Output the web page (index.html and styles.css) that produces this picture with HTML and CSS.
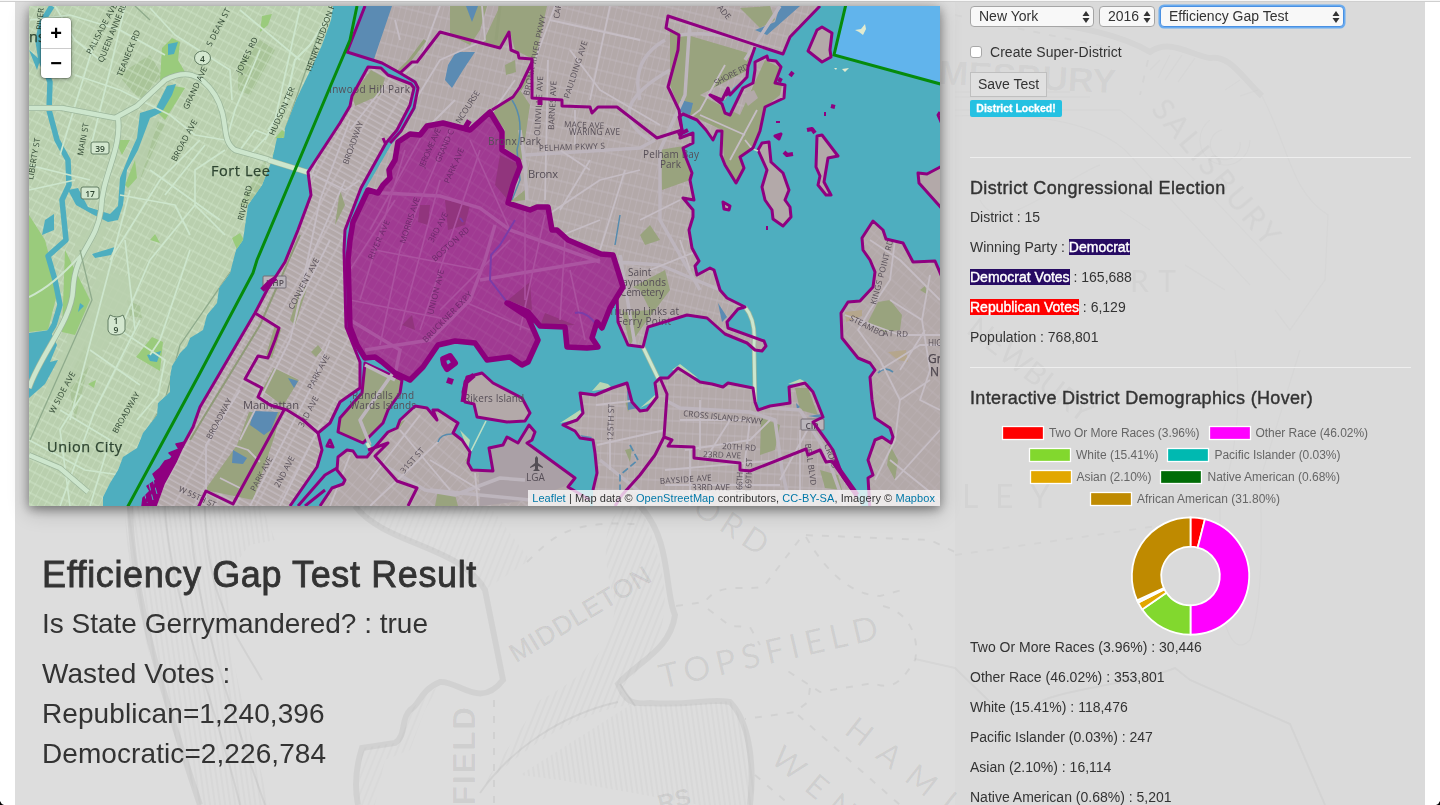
FILE: index.html
```html
<!DOCTYPE html>
<html lang="en">
<head>
<meta charset="utf-8">
<title>District Efficiency Gap</title>
<link rel="stylesheet" href="styles.css">
</head>
<body>
<div class="page">
  <svg class="backdrop" viewBox="0 0 1440 805" aria-hidden="true">
    <defs>
      <pattern id="hatchA" width="5" height="5" patternUnits="userSpaceOnUse" patternTransform="rotate(-8)"><path d="M1 0V5" class="etch thin"/></pattern>
      <pattern id="hatchB" width="6" height="6" patternUnits="userSpaceOnUse" patternTransform="rotate(22)"><path d="M1 0V6" class="etch thin"/></pattern>
    </defs>
    <path fill="url(#hatchA)" d="M125 506C125 580 155 690 200 805H270C240 690 205 590 250 545L275 540L262 506Z"/>
    <path class="etch bold" d="M130 506C132 600 165 700 200 805"/>
    <path class="etch" d="M165 506C170 600 215 700 240 805M190 506C190 600 235 720 265 805M205 506C205 600 240 640 262 680"/>
    <path fill="url(#hatchB)" d="M540 700C580 680 615 650 615 600C600 560 600 500 640 506C680 600 670 640 620 690L630 705C560 715 500 770 480 790Z"/>
    <path fill="url(#hatchA)" d="M630 705Q690 705 730 701Q760 740 752 805H700L560 780L520 775Z"/>
    <path fill="url(#hatchB)" d="M355 506C385 545 460 545 485 590L530 560L490 506ZM440 684L410 710L395 743L362 748L358 805H375L385 760L410 750L425 710Z" opacity=".7"/>
    <path class="etch bold" d="M355 506C385 545 460 545 485 590L503 680C480 710 458 680 440 682C420 690 420 705 410 710C400 720 407 735 395 743L362 748C355 770 355 790 358 805M640 506C672 540 664 590 675 615C670 650 640 660 618 684C625 700 630 705 650 703C690 706 710 698 730 702C748 720 755 760 750 805"/>
    <path class="etch" d="M618 702C560 715 510 750 480 793M620 684L635 706"/>
    <g class="etch dashed"><path d="M527 562C550 540 565 520 635 524"/><path d="M676 606L705 602C720 580 750 592 764 586L803 535L930 540L955 552M806 537C825 570 850 595 880 596L902 590M708 609L730 626L750 627L760 645M883 606C910 612 920 640 915 660C900 685 890 690 873 683L820 692L783 668M810 688L808 702L795 712L745 719M798 715L900 805M755 775L790 805M494 700V805"/></g>
    <path class="etch soft" d="M915 659L955 668L990 702M1040 702C1060 690 1150 680 1175 668L1190 680L1290 724L1325 805"/>
    <g class="mark">
      <text x="516" y="663" class="semi" font-size="26" transform="rotate(-31 516 663)" textLength="160">MIDDLETON</text>
      <text x="662" y="689" font-size="34" transform="rotate(-13 662 689)" textLength="224">TOPSFIELD</text>
      <text x="475" y="805" class="heavy" font-size="31" transform="rotate(-90 475 805)" textLength="98">FIELD</text>
      <text x="691" y="512" font-size="32" transform="rotate(33 691 512)" textLength="82">ORD</text>
      <text x="769" y="761" font-size="32" transform="rotate(40 769 761)" textLength="98">WEN</text>
      <text x="843" y="733" font-size="32" transform="rotate(38 843 733)" textLength="130">HAMI</text>
      <text x="660" y="812" class="heavy" font-size="24" transform="rotate(-14 660 812)">RS</text>
      <text x="938" y="84" class="heavy faint" font-size="34" transform="rotate(3 938 84)" textLength="178" lengthAdjust="spacingAndGlyphs">MESBURY</text>
      <g class="faint"><text x="1150" y="110" font-size="30" transform="rotate(50 1150 110)" textLength="180">SALISBURY</text>
      <text x="962" y="508" font-size="32" textLength="88">LEY</text>
      <text x="1130" y="292" font-size="30" textLength="46">RT</text>
      <text x="965" y="332" font-size="30" transform="rotate(38 965 332)">NEWBURY</text></g>
    </g>
    <g class="faint">
      <path class="etch bold" d="M1020 20Q1110 28 1150 52C1170 38 1190 55 1210 58C1230 55 1240 75 1262 96"/>
      <path class="etch thin" d="M1160 60L1150 70M1170 55L1158 78M1182 55L1165 80M1195 58L1178 82M1240 80L1225 90M1258 90L1240 96M955 92H1070M955 97H1090M955 110H1120Q1160 140 1290 280M955 116Q1080 110 1125 150L1250 285M1262 96C1290 150 1290 190 1328 215L1325 280L1290 330L1275 310M1210 120A25 25 0 1 0 1250 140M1222 130A15 15 0 1 0 1240 142M980 200C1000 240 1060 180 1100 165M1120 210L1150 230M1185 265L1225 290M1235 350Q1245 430 1220 500V600Q1230 660 1250 640Q1265 600 1260 480L1300 350"/>
      <path class="etch dashed" d="M955 15L1120 50M1148 60L1140 95M955 555L1200 520"/>
    </g>
    <path d="M0 801Q1 804 4 805H0ZM1440 801Q1439 804 1436 805H1440Z"/>
  </svg>

  <div class="container">
    <main class="main-col">
      <div class="map">
        <svg class="map-canvas" viewBox="29 6 911 500" width="911" height="500">
          <defs>
            <pattern id="gNJ" width="6" height="10" patternUnits="userSpaceOnUse" patternTransform="rotate(28)"><path d="M0 0V10M0 1H6" stroke="#d2e7cc" stroke-width=".8"/></pattern>
            <pattern id="gMan" width="18" height="5.5" patternUnits="userSpaceOnUse" patternTransform="rotate(29)"><path d="M1 0V6M0 1H18" stroke="#c6bec4" stroke-width="1.1"/></pattern>
            <pattern id="gBx" width="6" height="13" patternUnits="userSpaceOnUse" patternTransform="rotate(14)"><path d="M0 0V13M0 1H6" stroke="#c3bac0" stroke-width=".8"/></pattern>
            <pattern id="gD" width="7" height="12" patternUnits="userSpaceOnUse" patternTransform="rotate(32)"><path d="M0 0V12M0 1H7" stroke="#a84c9c" stroke-width=".8"/></pattern>
            <pattern id="gQ" width="7" height="12" patternUnits="userSpaceOnUse" patternTransform="rotate(3)"><path d="M0 0V12M0 1H7" stroke="#c3bac0" stroke-width=".8"/></pattern>
            <pattern id="gQ2" width="7" height="12" patternUnits="userSpaceOnUse" patternTransform="rotate(40)"><path d="M0 0V12M0 1H7" stroke="#c3bac0" stroke-width=".8"/></pattern>
            <path id="nj" d="M29 6H333L331 20 322 45 308 75 296 100 285 128 284 138 277 138 272 160 262 185 248 205 243 240 236 250 230 273 219 288 217 303 207 315 203 330 190 338 187 346 180 353 172 366 170 377 170 392 158 403 157 415 143 433 137 448 123 457 118 470 110 483 103 497 103 506H29Z"/>
            <path id="man" d="M368 67L352 96 350 106 340 123 308 172 311 195 298 230 285 262 267 290 255 313 200 407 193 427 182 447 172 458 160 477 143 506H290L317 467 322 450 318 433 330 423 340 402 360 388 360 362 346 327 344 250 345 230 361 188 386 143 397 130 410 105 414 88 410 84 388 75 381 68Z"/>
            <path id="bx" d="M365 6L347 52 382 63 400 73 415 80 418 88 416 108 400 135 391 145 365 190 350 230 348 260 350 327 365 358 382 362 410 380 423 367 438 345 475 343 487 360 510 357 522 365 528 362 538 340 528 317 540 326 565 327 567 347 587 348 598 347 592 338 597 322 602 328 610 308 617 295 618 322 628 345 643 347 648 327 687 315 707 318 725 334 747 343 755 350 762 351 766 346 764 341 728 328 727 322 738 309 745 307 727 298 720 290 714 270 710 268 697 275 695 266 699 261 692 248 689 230 693 217 693 210 683 198 694 200 690 180 692 173 686 158 683 148 693 143 693 133 680 138 682 130 679 117 683 114 697 120 706 130 713 140 717 131 722 131 721 155 725 165 736 183 744 168 740 157 753 148 760 131 765 107 784 98 785 85 775 83 781 67 776 61 768 60 767 56 755 62 755 70 753 83 743 88 730 115 725 113 722 104 710 95 725 100 733 88 747 77 748 67 755 47 783 54 790 37 820 6Z"/>
            <path id="randall" d="M365 363L402 380 400 393 388 410 383 423 363 443 338 432 340 418 362 393Z"/>
            <path id="astoria" d="M320 506L332 488 343 484 345 480 337 470 338 457 347 450 353 451 357 457 367 457 375 447 388 432 397 428 400 420 415 406 427 408 437 420 433 410 438 410 458 423 453 433 462 440 470 452 468 463 472 470 493 471 489 448 503 445 507 437 518 443 529 425 535 432 532 440 527 443 575 478 568 487 590 500V506Z"/>
            <path id="queens" d="M593 506V487L597 473 595 453 593 440 580 438 575 431 563 425 577 420 583 413 580 393 595 395 612 388 627 383 632 402 640 411 647 410 657 397 655 383 660 378 668 378 678 368 700 382 712 384 723 387 728 383 753 388 755 402 758 410 770 406 790 403 789 387 805 383 813 392 823 417 813 422 826 440 833 450 843 477 857 497 862 506Z"/>
            <path id="neck" d="M944 165L927 174 918 173 919 183 944 211ZM944 282L935 261 913 262 903 243 886 239 883 230 873 221 862 238 863 250 870 260 875 272 873 287 860 301 848 302 841 313 842 338 858 358 870 363 875 370 870 377 872 400 875 418 890 428 893 437 891 443 882 437 875 440 868 460 873 475 868 478 870 510H944Z"/>
            <path id="isles" d="M467 377L482 373 493 383 522 398 530 413 525 421 507 422 477 417 474 404 465 402 463 392ZM817 136L822 135 838 156 828 158 824 182 831 195 826 195 818 185 820 176 816 167ZM758 150L762 143 769 142 771 162 783 173 789 190 785 200 790 207 791 217 783 226 773 219 772 210 765 200 762 187 767 170ZM808 51L817 30 822 27 832 33 830 50 831 57 822 62ZM723 202L730 206 729 210 724 209ZM775 136L781 134 779 139Z"/>
            <path id="d15" d="M490 112L470 130 443 123 427 126 420 135 410 134 398 142 395 160 389 170 390 178 383 185 378 193 368 190 353 222 350 240 348 260 350 327 357 345 365 358 375 357 382 362 395 373 410 380 423 367 438 345 455 341 475 343 487 360 510 357 522 365 528 362 538 340 528 317 507 303 528 312 540 326 565 327 567 347 587 348 598 347 592 338 597 322 602 328 610 308 623 287 613 255 601 254 568 240 557 230 552 230 548 207 537 207 530 210 508 203 513 185 520 167 518 160 502 150 502 132Z"/>
            <clipPath id="cBx"><use href="#bx"/></clipPath><clipPath id="cMan"><use href="#man"/></clipPath><clipPath id="cNJ"><use href="#nj"/></clipPath><clipPath id="cD"><use href="#d15"/></clipPath>
            <clipPath id="cQ"><use href="#queens"/></clipPath><clipPath id="cA"><use href="#astoria"/></clipPath><clipPath id="cN"><use href="#neck"/></clipPath>
          </defs>
          <path fill="#4eaebf" d="M29 6H940V506H29Z"/>
          <path class="line-green" fill="#61b4ec" d="M846 4L834 55 944 85V0Z"/>
          <path fill="#e2ebd0" d="M855 30L861 29 865 24 866 29 863 35 859 32ZM842 69L849 68 845 72ZM834 68L837 68 836 70Z"/>

          <!-- New Jersey -->
          <use href="#nj" fill="#b9cfae"/>
          <g clip-path="url(#cNJ)">
            <path fill="#a9c499" d="M118 75L150 55 162 75 140 100ZM238 65L260 40 275 50 250 95 238 90ZM130 170L155 120 165 125 140 180ZM68 380L85 345 90 360 75 420ZM127 300L140 306 142 318 130 316ZM240 205L265 160 270 175 250 205Z"/>
            <path fill="url(#gNJ)" d="M29 6H340V506H29Z"/>
            <path fill="#b9cfae" d="M100 270L140 280 120 330 60 400 45 390ZM135 130L160 115 140 180 125 220ZM75 240L110 215 100 245 75 270Z" opacity=".8"/>
            <path fill="#9acb7c" d="M29 215L45 240 58 290 48 330 29 332ZM162 48L172 38 180 42 178 60 185 72 172 78 160 80ZM155 110L168 85 185 88 165 120ZM125 185L135 160 137 178 128 188ZM152 337L163 342 160 371 136 357ZM232 238L240 233 245 242 238 252ZM65 250L90 300 75 335 62 332ZM115 140L130 140 122 155ZM275 138L282 130 286 133 280 140ZM293 135L310 90 305 85 296 115 272 155ZM88 384L96 380 94 388ZM150 240L155 234 160 243ZM262 16L272 14 268 25 260 32Z"/>
            <path class="water-line" stroke-width="5.500" d="M52 6L42 22 38 40 41 60 50 82 49 110 57 140 68 160 69 185 62 200 66 240 48 256 55 280 60 305 54 325 42 345"/>
            <path fill="#4eaebf" d="M29 333L50 330 57 345 50 362 58 360 45 384 29 398ZM167 86L176 84 172 95 162 112 150 118 138 150 127 170 123 205 118 220 108 222 92 214 76 205 68 190 78 188 88 207 110 214 118 206 120 178 131 151 137 138 140 113 156 108ZM45 220L54 214 54 230 42 235ZM147 355L161 351 157 362 150 361ZM29 50L40 60 37 70ZM92 254L115 247 111 255 95 258ZM80 303L84 306 78 312ZM168 44L178 42 174 54 168 55Z"/>
            <g class="nj-road thin-road"><path d="M75 75L120 90 170 115 195 135 225 140M30 20L70 15 120 30 165 55M150 8L175 35 230 70 232 100M240 10L300 60M90 150L110 70 125 6M60 155L95 40M29 165L90 180M200 140L160 180 110 260M225 150L195 170 195 205 225 235M260 50L235 110 228 135M150 170L220 220M195 205L150 260 120 330M29 190L75 180M120 195L175 205 190 235M55 6L75 40 100 60M130 190L70 420M140 320L95 410 60 506M120 330L165 360 158 395 137 420M90 350L140 385M60 410L110 440 90 506M29 440L85 470 120 475M205 145L165 195M300 8L275 120 265 140M125 240L135 330M190 250L160 340 150 355M240 150L255 130 268 135 250 155M82 395L60 430 70 506"/></g>
            <path class="nj-case" d="M29 108L62 108 115 118 137 106 165 80C185 70 200 72 215 95 230 120 220 140 235 150L270 160 300 172M118 118C122 150 102 175 101 210 96 245 75 250 73 290 72 320 40 355 29 388M29 455L60 468 88 492"/>
            <path class="nj-main" d="M29 108L62 108 115 118 137 106 165 80C185 70 200 72 215 95 230 120 220 140 235 150L270 160 300 172M118 118C122 150 102 175 101 210 96 245 75 250 73 290 72 320 40 355 29 388M29 455L60 468 88 492"/>
            <path class="nj-road" d="M335 6L310 45 295 60 285 105 268 130M29 297Q55 285 85 250"/>
            <path fill="none" stroke="#8fab8c" stroke-width="1.300" d="M80 250L92 300 30 440M135 6L150 20M320 30L285 130M240 258L180 345 165 400 108 500"/>
          </g>
          <path class="nj-case" d="M268 160L310 173"/><path class="nj-main" d="M268 160L310 173"/>

          <!-- Manhattan -->
          <use href="#man" fill="#b3a9a9"/>
          <g clip-path="url(#cMan)">
            <path fill="url(#gMan)" d="M130 60H420V506H130Z"/>
            <path class="park" d="M371 70L385 78 380 95 355 106 352 95ZM274 368L299 380 283 406 262 390ZM249 412L280 412 275 435 253 500 205 490 237 445ZM275 325L281 330 272 358 266 355ZM318 345L322 350 316 357 311 352ZM300 290L308 285 295 325 290 320ZM345 205L335 225 340 190Z"/>
            <path class="pond" d="M253 411L278 412 271 430 264 435 250 425ZM288 378L298 381 294 388ZM233 450L247 458 243 464 232 463Z"/>
            <path class="road" d="M350 120L320 200 295 320M206 500V445L240 390M345 180L310 260 290 340 240 440M308 172L345 190 360 180M385 85L350 130M250 506L310 390 330 340M280 506L320 425M330 240L300 300M335 110L310 180M233 445L248 450 260 462M220 478L240 488"/>
            <path fill="none" stroke="#8f9a78" stroke-width="2" d="M300 235L260 325 205 415 190 440"/>
          </g>
          <path class="purple" d="M185 442L176 444 179 449 169 453 174 458 165 461 160 468 153 474 156 480 147 486 150 491 143 498 142 506H156L164 484 176 462Z"/>
          <path stroke="#4eaebf" stroke-width="1" d="M148 480L153 500M152 476L157 494M144 492L147 503"/>

          <!-- Bronx and Westchester -->
          <use href="#bx" fill="#b3a9a9"/>
          <g clip-path="url(#cBx)">
            <path fill="url(#gBx)" d="M345 0H830V390H345Z"/>
            <path class="park" d="M450 6H487L480 30 470 45 450 35ZM500 6H547L535 60 515 50 510 32 500 47 483 42ZM491 112L520 90 530 105 522 160 505 148 505 130ZM670 30L755 55 748 70 700 95 740 115 765 60 785 70 780 95 765 107 755 145 736 183 724 160 722 130 697 118 680 110 670 85ZM659 150L690 145 690 180 662 190ZM525 190L530 160 525 200 510 202ZM740 8L770 6 775 20 760 28ZM618 295L665 270 670 290 640 330 630 345ZM640 235L650 225 660 240 645 245ZM505 65L515 60 516 72 506 75Z"/>
            <path fill="#b3a9a9" d="M742 95L754 90 758 98 748 106ZM600 295L615 280 640 290 650 310 625 312Z"/>
            <path class="pond" d="M365 6H392L373 62 347 52ZM456 52L475 52 463 70 452 88 445 80 448 65ZM680 100L693 103 690 115 680 112ZM718 303L727 317 722 322ZM767 35L800 6H780L775 22 755 30ZM466 6H478L472 22Z"/>
            <path class="road wide" d="M520 130L525 165 527 200M690 20L685 95 660 150 660 220 700 290M670 70Q600 110 650 140M590 260L660 265 720 290 745 307M680 35Q720 30 755 45M780 6L745 60M640 100Q630 60 665 40M525 155L640 148 655 140M620 255L635 345M350 220L365 190 420 192 480 205 520 235 600 262"/>
            <path class="road" d="M482 6L485 40 440 60 400 125M440 6L420 60 385 90M555 6L535 60M570 50L600 90 660 125M515 80L480 130M550 20L640 40M590 160L560 210M625 170L600 250M540 220L600 180 640 170M700 115L745 135M725 65L700 110 680 125M757 110L730 160M745 140L753 150M610 6L590 100M550 240L600 220M560 150L590 170M455 100L430 125M650 270L700 250M640 220L680 200M400 40L395 20M680 240L690 270M548 60L545 200M575 110V145"/>
            <path fill="none" stroke="#568bae" stroke-width="1.500" d="M512 100Q525 120 517 150L520 180 512 200M620 215L615 245"/>
            <path fill="none" stroke="#95a07a" stroke-width="3" d="M425 40L410 60 380 90M500 6L496 40M533 70L520 90"/>
          </g>
          <use href="#randall" class="purple" fill="#9aa482"/>
          <path class="road wide" d="M395 370L360 420 370 445M365 365L395 380"/>

          <!-- Queens -->
          <path fill="#b9d7b4" d="M592 391L600 382 608 384 612 388ZM560 423L580 410 584 418ZM640 408L655 395 656 400ZM672 370L680 364 698 378ZM788 384L800 379 808 383ZM460 430L470 440 468 450Z"/>
          <use href="#astoria" fill="#b3a9a9"/>
          <g clip-path="url(#cA)">
            <path fill="url(#gQ2)" d="M315 400H530V510H315Z"/>
            <path fill="#aaa0a6" d="M478 448L535 425 580 480 530 500 480 506Z"/>
            <path class="park" d="M438 490L455 495 458 506H435ZM395 425L405 420 398 430ZM465 460L475 450 473 470Z"/>
            <path class="road wide" d="M375 460L425 490 455 495 500 478 525 480M430 490L530 500"/>
            <path class="road" d="M350 455L330 506M400 430L450 490M420 415L370 480M430 460L480 490M370 506L440 440M475 473L478 506"/>
            <path class="pond-line" d="M438 442Q440 434 452 434"/>
          </g>
          <use href="#queens" fill="#b3a9a9"/>
          <g clip-path="url(#cQ)">
            <path fill="url(#gQ)" d="M555 360H865V510H555Z"/>
            <path class="park" d="M761 418L780 425 775 450 760 455ZM625 450L632 448 630 462ZM820 470L838 475 842 490 825 488ZM625 400L632 402 628 412ZM795 388L808 388 818 415 800 410ZM830 440L836 450 832 455Z"/>
            <path class="pond" d="M627 390L638 408 628 410ZM796 403L800 407 797 409ZM808 416L822 414 820 418ZM580 435L592 437 588 442Z"/>
            <path class="road wide" d="M665 400L680 408 750 412 775 420 782 470 790 506M600 460L625 480 650 500M770 408L800 410 825 450 845 506"/>
            <path class="road" d="M596 405L640 400M597 445L665 430M680 420H750M685 450L750 440 770 420M665 470L780 460M610 405V470M700 400V450M730 420L705 460M800 430V500M665 485H780M690 450V506M750 420L740 500M810 425L780 480"/>
            <path class="pond-line" stroke-dasharray="7 3" d="M630 445L638 460 620 475V490"/>
          </g>
          <use href="#neck" fill="#b3a9a9"/>
          <g clip-path="url(#cN)">
            <path fill="url(#gQ2)" d="M835 210H940V510H835Z" opacity=".6"/>
            <path class="park" d="M878 302L890 300 902 315 900 330 885 332 868 322ZM890 445L898 460 895 480 887 465ZM920 290L925 286 928 295Z"/>
            <path fill="#b5a68c" d="M845 312L862 310 862 316 846 322ZM888 352L906 350 908 362 898 360Z"/>
            <path class="pond-line" stroke-width="4" d="M878 373Q885 366 893 372"/>
            <path class="road" d="M895 240L890 280 870 310 858 330 880 360 900 400 895 440 875 480M890 300L922 320 930 370 920 400 940 410M845 315L900 335 940 335M880 370L920 345 940 345M900 400L930 380M895 480L940 430M870 240L900 260 940 300M930 275L922 320M890 460L940 500M925 330L900 370"/>
          </g>
          <use href="#isles" class="purple" fill="#b3a9a9"/>

          <!-- bridges -->
          <path class="nj-case slim" d="M642 345L658 378M745 307Q756 320 754 345L755 402M367 443L372 452"/>
          <path class="nj-main slim" d="M642 345L658 378M745 307Q756 320 754 345L755 402M367 443L372 452"/>
          <path fill="none" stroke="#bfe0c4" stroke-width="1.600" d="M486 421L471 451M753 149L758 151"/>
          <path fill="#c7e5c8" d="M815 421H824V430H820Z"/>

          <!-- place names -->
          <g class="lbl">
            <text x="211" y="176" class="town" textLength="59">Fort Lee</text>
            <text x="47" y="452" class="town" textLength="75">Union City</text>
            <text x="29" y="42" class="town">ns</text>
            <g class="street">
            <text x="91" y="55" transform="rotate(-62 91 55)" textLength="56">PALISADE AVE</text><text x="103" y="63" transform="rotate(-68 103 63)" textLength="64">QUEEN ANNE RD</text><text x="122" y="77" transform="rotate(-68 122 77)" textLength="49">TEANECK RD</text><text x="211" y="47" transform="rotate(-62 211 47)" textLength="42">S DEAN ST</text><text x="241" y="74" transform="rotate(-64 241 74)" textLength="39">JONES RD</text><text x="188" y="110" transform="rotate(-65 188 110)" textLength="46">GRAND AVE</text><text x="176" y="162" transform="rotate(-62 176 162)" textLength="46">BROAD AVE</text><text x="83" y="156" transform="rotate(-80 83 156)" textLength="33">MAIN ST</text><text x="33" y="180" transform="rotate(-80 33 180)" textLength="42">LIBERTY ST</text><text x="311" y="72" transform="rotate(-70 311 72)" textLength="71">HENRY HUDSON P</text><text x="274" y="136" transform="rotate(-66 274 136)" textLength="52">HUDSON TER</text><text x="243" y="221" transform="rotate(-75 243 221)" textLength="36">RIVER RD</text><text x="42" y="30" transform="rotate(-85 42 30)">RIVER</text>
            <text x="54" y="414" transform="rotate(-62 54 414)" textLength="46">W SIDE AVE</text><text x="117" y="434" transform="rotate(-60 117 434)" textLength="46">BROADWAY</text>
            </g>
          </g>
          <g class="shield"><rect x="91" y="142" width="18" height="12" rx="2"/><rect x="81" y="187" width="18" height="12" rx="2"/><ellipse cx="202.500" cy="58" rx="8" ry="7"/><path d="M110 315Q117 319 123 315L125 320V330Q123 335 116 335Q109 335 108 330V320Z"/><rect x="263" y="276" width="23" height="12" rx="1" class="dim"/><rect x="801" y="419" width="23" height="11" rx="1" class="dim"/></g>
          <g class="lbl num"><text x="100" y="151.500">39</text><text x="90" y="196.500">17</text><text x="202.500" y="62">4</text><text x="116" y="324">1</text><text x="116" y="333">9</text><text x="275" y="286" class="dimtext">HHP</text><text x="812" y="428.500" class="dimtext">CIP</text></g>
          <g class="lbl dimtext">
            <text x="329" y="93" textLength="81">Inwood Hill Park</text><text x="528" y="178" class="big" textLength="30">Bronx</text><text x="643" y="158" textLength="56">Pelham Bay</text><text x="660" y="168">Park</text><text x="628" y="276">Saint</text><text x="616" y="286" textLength="50">Raymonds</text><text x="620" y="295.500" textLength="44">Cemetery</text><text x="609" y="315" textLength="70">Trump Links at</text><text x="617" y="325" textLength="54">Ferry Point</text><text x="243" y="409" class="big" textLength="56">Manhattan</text><text x="352" y="399" textLength="62">Randalls and</text><text x="350" y="409" textLength="66">Wards Islands</text><text x="464" y="402" textLength="60">Rikers Island</text><text x="526" y="481">LGA</text><text x="928" y="363" class="town small">Gr</text><text x="930" y="376" class="town small">N</text><text x="928" y="346" class="street">HIG</text>
            <g class="street">
            <text x="348" y="165" transform="rotate(-70 348 165)" textLength="45">BROADWAY</text><text x="293" y="310" transform="rotate(-62 293 310)" textLength="57">CONVENT AVE</text><text x="312" y="390" transform="rotate(-62 312 390)" textLength="38">PARK AVE</text><text x="211" y="440" transform="rotate(-62 211 440)" textLength="45">BROADWAY</text><text x="255" y="492" transform="rotate(-62 255 492)" textLength="38">PARK AVE</text><text x="279" y="488" transform="rotate(-62 279 488)" textLength="34">2ND AVE</text><text x="303" y="428" transform="rotate(-62 303 428)" textLength="34">3RD AVE</text><text x="178" y="491" transform="rotate(25 178 491)" textLength="40">W 55TH ST</text><text x="404" y="474" transform="rotate(-48 404 474)" textLength="31">31ST ST</text>
            <text x="460" y="124" transform="rotate(-57 460 124)" textLength="37">NCOURSE</text><text x="529" y="96" transform="rotate(-78 529 96)" textLength="82">BRONX RIVER PKWY</text><text x="540" y="136" transform="rotate(-87 540 136)" textLength="60">OLINVILLE AVE</text><text x="554" y="130" transform="rotate(-87 554 130)" textLength="49">BARNES AVE</text><text x="569" y="99" transform="rotate(-72 569 99)" textLength="60">PAULDING AVE</text><text x="564" y="127" transform="rotate(2 564 127)" textLength="40">MACE AVE</text><text x="569" y="135" textLength="51">WARING AVE</text><text x="539" y="151" transform="rotate(-2 539 151)" textLength="66">PELHAM PKWY S</text><text x="716" y="86" transform="rotate(-28 716 86)" textLength="38">SHORE RD</text><text x="717" y="8" transform="rotate(50 717 8)">ADE</text><text x="559" y="19" transform="rotate(-80 559 19)">CAR</text>
            <text x="876" y="305" transform="rotate(-75 876 305)" textLength="67">KINGS POINT RD</text><text x="849" y="320" transform="rotate(27 849 320)" textLength="38">STEAMBO</text><text x="883" y="336" transform="rotate(2 883 336)" textLength="25">AT RD</text><text x="683" y="416" transform="rotate(6 683 416)" textLength="80">CROSS ISLAND PKWY</text><text x="722" y="449" transform="rotate(3 722 449)" textLength="34">20TH RD</text><text x="703" y="457" transform="rotate(2 703 457)" textLength="38">23RD AVE</text><text x="660" y="484" transform="rotate(-4 660 484)" textLength="52">BAYSIDE AVE</text><text x="692" y="491" textLength="38">33RD AVE</text><text x="613" y="441" transform="rotate(-88 613 441)" textLength="37">125TH ST</text><text x="805" y="444" transform="rotate(82 805 444)" textLength="42">BELL BLVD</text><text x="824" y="445" transform="rotate(70 824 445)" textLength="25">CROSS</text><text x="742" y="494" transform="rotate(-88 742 494)" textLength="22">166TH</text><text x="751" y="493" transform="rotate(-88 751 493)" textLength="35">169TH ST</text>
            </g>
          </g>
          <path fill="#544e55" d="M536.500 456L538 458V463L543 467V468L538 466V469L540 471H533L535 469V466L530 468V467L535 463V458Z"/>

          <!-- selected district -->
          <use href="#d15" fill="#a03a92"/>
          <g clip-path="url(#cD)">
            <path fill="url(#gD)" d="M340 100H630V390H340Z"/>
            <path fill="#91357d" d="M420 205L430 205 428 225 418 222ZM445 200L470 205 465 225 448 230ZM500 155L520 165 508 200 495 185ZM508 300L530 282 532 310ZM402 325L412 315 415 330ZM545 313L575 325 540 326Z"/>
            <path fill="none" stroke="#ab55a1" stroke-width="3.500" d="M365 192L440 196 480 208 510 230 600 262M365 350L430 340 470 300 485 260 495 225M350 320L400 350 395 375M480 280L600 260"/>
            <path fill="none" stroke="#ab52a0" stroke-width="1.600" d="M450 130L400 250 380 345M425 130L370 230M480 150L420 330M395 200L350 270M510 240L440 310M525 210V300M565 240L560 320M470 140L510 230M375 250L480 270M405 150L360 300M440 180L400 330M545 215L520 330M460 300L530 330M350 300L450 320M570 270L585 340"/>
            <path fill="none" stroke="#7b3ca8" stroke-width="2" d="M515 220L500 245 491 255 490 280 507 302M575 313Q585 310 597 325M460 218L463 222"/>
          </g>
          <g class="lbl street inside">
            <text x="424" y="168" transform="rotate(-66 424 168)" textLength="42">JEROME AVE</text><text x="440" y="163" transform="rotate(-66 440 163)" textLength="35">GRAND C</text><text x="449" y="184" transform="rotate(-66 449 184)" textLength="38">PARK AVE</text><text x="373" y="260" transform="rotate(-66 373 260)" textLength="42">RIVER AVE</text><text x="405" y="244" transform="rotate(-72 405 244)" textLength="48">MORRIS AVE</text><text x="433" y="243" transform="rotate(-62 433 243)" textLength="33">3RD AVE</text><text x="435" y="262" transform="rotate(-42 435 262)" textLength="47">BOSTON RD</text><text x="433" y="315" transform="rotate(-76 433 315)" textLength="46">UNION AVE</text><text x="426" y="343" transform="rotate(-46 426 343)" textLength="67">BRUCKNER EXPY</text>
          </g>

          <!-- district boundaries -->
          <g class="purple" fill="none">
            <path d="M365 6L347 52 382 63 400 73 415 82 418 88 414 108 401 131 390 143"/>
            <path d="M320 506L332 488 343 484 345 480 337 470 338 457 347 450 353 451 357 457 367 457 375 447 388 432 397 428 400 420 415 406 427 408 437 420 433 410 438 410 458 423 453 433 462 440 470 452 468 463 472 470 493 471 489 448 503 445 507 437 518 443 529 425 535 432 532 440 527 443 575 478 568 487 590 500"/>
            <path d="M593 490L597 473 595 453 593 440 580 438 575 431 563 425 577 420 583 413 580 393 595 395 612 388 627 383 632 402 640 411 647 410 657 397 655 383 660 378 668 378 678 368 700 382 712 384 723 387 728 383 753 388 755 402 758 410 770 406 790 403 789 387 805 383 813 392 823 417 813 422 826 440 833 450 843 477 857 497"/>
            <use href="#neck"/>
            <path d="M143 506L160 477 172 458 182 447 193 427 200 407 255 313 267 290 285 262 298 230 311 195 308 172 340 123 350 106 352 96 368 67 381 68 388 75 411 84 414 88 410 105 397 130 386 143 361 188 345 230 344 250 346 327 360 362 360 388 340 402 330 423 318 433 322 450 317 467 290 506"/>
            <path d="M255 313L279 328 275 340 268 358 258 356 245 379 262 388 258 397 270 405 287 410 303 420 318 433M284 410L233 504 206 491 198 508M383 138L386 145"/>
            <path d="M298 506L325 475 337 468M305 506L325 490M330 440L333 447 327 446Z"/>
            <path d="M400 73L412 62 417 62 440 32 500 48 509 32 511 50 518 53 519 58 532 59 532 98 562 100 562 106 590 107 592 113 598 107 617 107 657 138 682 130 679 110 668 87 678 50 679 35 666 28 668 16 783 54 790 37 820 6M532 62L520 87 513 97 492 110"/>
            <path d="M617 295L618 322 628 345 643 347 648 327 687 315 707 318 725 334 747 343 755 350 762 351 766 346 764 341 728 328 727 322 738 309 745 307 727 298 720 290 714 270 710 268 697 275 695 266 699 261 692 248 689 230 693 217 693 210 683 198 694 200 690 180 692 173 686 158 683 148 693 143 693 133 680 138 682 130 679 117 683 114 697 120 706 130 713 140 717 131 722 131 721 155 725 165 736 183 744 168 740 157 753 148 760 131 765 107 784 98 785 85 775 83 781 67 776 61 768 60 767 56 755 62 755 70 753 83 743 88 730 115 725 113 722 104 710 95 722 100 728 88 730 95 747 77 748 67 755 47"/>
            <path d="M660 378L667 394 664 437 655 455 640 475 622 495 615 506M664 437L672 440 668 446 694 447 694 458 740 463 740 470 750 471 806 449 808 455 820 450 826 462 833 461M368 450L388 443 375 456 397 481 417 488 408 506M940 112L938 115 942 124"/>
            <path stroke-width="5" d="M833 461L857 495M540 100V105M262 290L270 282 276 278M463 402L466 382 474 375"/>
            <path stroke-width="6" d="M443 359L450 356 455 363 447 369 444 364ZM447 380L453 382"/>
            <path stroke-width="4" d="M831 106L835 107M824 114H826M807 130L812 129 815 133M784 152L787 155 793 154M790 76L793 72M781 78L779 82M778 121V123M766 228H768M725 95L730 92M678 135L688 130"/>
          </g>
          <use href="#d15" class="selected"/>
          <path class="selected" stroke-linecap="square" d="M510 304L527 312M465 128L468 123"/>
          <text x="488" y="145" class="lbl dimtext" textLength="53">Bronx Park</text>
          <path class="line-green" fill="none" d="M357 6L350 40 333 80 257 260 253 273 200 373 127 508"/>
        </svg>
        <div class="zoom-ctl"><a>+</a><a>−</a></div>
        <div class="attribution"><a>Leaflet</a> | Map data © <a>OpenStreetMap</a> contributors, <a>CC-BY-SA</a>, Imagery © <a>Mapbox</a></div>
      </div>
      <section class="result">
        <h1>Efficiency Gap Test Result</h1>
        <p class="is-g">Is State Gerrymandered? : true</p>
        <p class="wasted">Wasted Votes :<br><span class="rep">Republican=1,240,396</span><br><span class="dem">Democratic=2,226,784</span></p>
      </section>
    </main>

    <aside class="panel">
      <div class="selects">
        <span class="sel state"><select><option>New York</option></select><svg viewBox="0 0 8 12"><path d="M4 0L7.500 5H.5ZM4 12L7.500 7H.5Z"/></svg></span>
        <span class="sel year"><select><option>2016</option></select><svg viewBox="0 0 8 12"><path d="M4 0L7.500 5H.5ZM4 12L7.500 7H.5Z"/></svg></span>
        <span class="sel test"><select><option>Efficiency Gap Test</option></select><svg viewBox="0 0 8 12"><path d="M4 0L7.500 5H.5ZM4 12L7.500 7H.5Z"/></svg></span>
      </div>
      <label class="check"><input type="checkbox"><span>Create Super-District</span></label>
      <button class="save">Save Test</button>
      <span class="locked">District Locked!</span>
      <hr>
      <h2>District Congressional Election</h2>
      <p>District : 15</p>
      <p>Winning Party : <mark class="dem-tag">Democrat</mark></p>
      <p><mark class="dem-tag">Democrat Votes</mark> : 165,688</p>
      <p><mark class="rep-tag">Republican Votes</mark> : 6,129</p>
      <p>Population : 768,801</p>
      <hr class="second">
      <h2 class="demo">Interactive District Demographics (Hover)</h2>
      <svg class="chart" viewBox="970 417 441 220" width="441" height="220">
        <g stroke="#fff" stroke-width="1.300">
          <rect x="1002.500" y="426.500" width="41" height="13" fill="#f00"/><rect x="1209.500" y="426.500" width="41" height="13" fill="#f0f"/>
          <rect x="1029.500" y="448.500" width="41" height="13" fill="#82d82e"/><rect x="1167.500" y="448.500" width="41" height="13" fill="#00b9b1"/>
          <rect x="1030.500" y="470.500" width="41" height="13" fill="#e2a700"/><rect x="1160.500" y="470.500" width="41" height="13" fill="#006c06"/>
          <rect x="1090.500" y="492.500" width="41" height="13" fill="#bf8a00"/>
        </g>
        <g class="legend">
          <text x="1049" y="437" textLength="150.500">Two Or More Races (3.96%)</text><text x="1255.500" y="437" textLength="112.500">Other Race (46.02%)</text>
          <text x="1076" y="459" textLength="82.500">White (15.41%)</text><text x="1214.500" y="459" textLength="126">Pacific Islander (0.03%)</text>
          <text x="1076.500" y="481" textLength="75">Asian (2.10%)</text><text x="1207.500" y="481" textLength="132.500">Native American (0.68%)</text>
          <text x="1137" y="503" textLength="143">African American (31.80%)</text>
        </g>
        <g transform="translate(1190.500 576)" stroke="#fff" stroke-width="1.800">
          <path fill="#f00" d="M0-58.700A58.700 58.700 0 0 1 14.460-56.890L7.230-28.440A29.350 29.350 0 0 0 0-29.350Z"/>
          <path fill="#f0f" d="M14.460-56.890A58.700 58.700 0 0 1 0 58.700V29.350A29.350 29.350 0 0 0 7.230-28.440Z"/>
          <path fill="#82d82e" d="M0 58.700A58.700 58.700 0 0 1-48.300 33.400L-24.150 16.700A29.350 29.350 0 0 0 0 29.350Z"/>
          <path fill="#e2a700" d="M-48.300 33.400A58.700 58.700 0 0 1-52.300 26.600L-26.150 13.300A29.350 29.350 0 0 0-24.150 16.700Z"/>
          <path fill="#e8f4e8" d="M-52.300 26.600A58.700 58.700 0 0 1-53.400 24.300L-26.700 12.150A29.350 29.350 0 0 0-26.150 13.300Z"/>
          <path fill="#bf8a00" d="M-53.400 24.300A58.700 58.700 0 0 1 0-58.700V-29.350A29.350 29.350 0 0 0-26.700 12.150Z"/>
        </g>
      </svg>
      <p>Two Or More Races (3.96%) : 30,446</p>
      <p>Other Race (46.02%) : 353,801</p>
      <p>White (15.41%) : 118,476</p>
      <p>Pacific Islander (0.03%) : 247</p>
      <p>Asian (2.10%) : 16,114</p>
      <p>Native American (0.68%) : 5,201</p>
    </aside>
  </div>
</div>
</body>
</html>
```

FILE: styles.css
```css
* { box-sizing: border-box; }
html, body { margin: 0; height: 805px; overflow: hidden; background: #fff; }
body { font: 14px/20px "Liberation Sans", Arial, sans-serif; color: #333; }
.page { position: relative; height: 805px; overflow: hidden; border-top: 1px solid #f7f7f7;
  background: linear-gradient(#cfcfcf 0 1px, transparent 1px), linear-gradient(90deg, #fff 15px, #ddd 15px 955px, #dadada 955px 1425px, #fff 1425px); }
.backdrop { position: absolute; left: 0; top: -1px; width: 1440px; height: 805px; }
.etch { fill: none; stroke: #000; stroke-opacity: .05; stroke-width: 2; }
.etch.bold { stroke-width: 6; }
.etch.thin { stroke-width: 1.5; stroke-opacity: .032; }
.etch.soft { stroke-opacity: .03; }
.dashed { stroke-dasharray: 7 9; stroke-width: 2; }
.mark text { font-family: Lato, "Liberation Sans", sans-serif; fill: #000; fill-opacity: .065; }
.mark .semi { font-family: "Liberation Sans", sans-serif; stroke: #000; stroke-opacity: .05; stroke-width: 1; }
.mark .heavy { font-family: "Liberation Sans", sans-serif; font-weight: 700; }
.faint { opacity: .5; }
.container { position: relative; display: flex; padding: 5px 15px 0; height: 804px; }
.main-col { width: 940px; padding-left: 14px; flex: none; }
.panel { width: 470px; padding: 0 14px 0 15px; }

.map { position: relative; width: 911px; height: 500px; box-shadow: 0 3px 10px rgba(0,0,0,.38), 0 5px 20px rgba(0,0,0,.24); }
.map-canvas { display: block; }
.purple { stroke: #8f0080; stroke-width: 3; stroke-linejoin: round; }
path.purple:not([fill]) { fill: #8f0080; stroke-width: 1.5; }
.selected { fill: none; stroke: #8b007c; stroke-width: 5.5; stroke-linejoin: round; }
.line-green { stroke: #068b0c; stroke-width: 3; }
.water-line { fill: none; stroke: #4eaebf; stroke-linejoin: round; }
.nj-case, .nj-main, .nj-road, .road, .pond-line { fill: none; stroke-linejoin: round; }
.nj-case { stroke: #9cb69c; stroke-width: 6; }
.nj-main { stroke: #cde6cd; stroke-width: 4.5; }
.nj-case.slim { stroke-width: 4.5; }
.nj-main.slim { stroke-width: 3; }
.nj-road { stroke: #cde6cd; stroke-width: 2; }
.thin-road { stroke-width: 1.7; fill: none; }
.road { stroke: #c5bdc4; stroke-width: 1.8; }
.road.wide { stroke: #bdb5bd; stroke-width: 3.5; }
.park { fill: #99a37e; }
.pond { fill: #5b8bb3; }
.pond-line { stroke: #568bae; stroke-width: 1.7; }
.lbl { font: 10px "Open Sans", "Noto Sans", sans-serif; fill: #2e4531; }
.lbl .town { font-size: 14.5px; stroke: #2e4531; stroke-width: .25; }
.lbl .town.small { font-size: 12px; stroke: #423c43; }
.lbl .street, .lbl.street { font-size: 8.2px; }
.lbl.dimtext, .dimtext { fill: #564e57; }
.dimtext .big { font-size: 11.2px; }
.lbl.inside { fill: #6b2869; }
.lbl.num { font-size: 8.5px; font-weight: 600; text-anchor: middle; }
.shield > * { fill: #d3e7cf; stroke: #617c62; stroke-width: 1; }
.shield .dim { fill: #bab5bb; stroke: #746e76; }

.zoom-ctl { position: absolute; left: 12px; top: 12px; width: 30px; background: #fff; border-radius: 4px; box-shadow: 0 0 0 .5px rgba(0,0,0,.3), 0 1px 4px rgba(0,0,0,.4); font: bold 20px/30px "Liberation Sans", sans-serif; color: #000; text-align: center; }
.zoom-ctl a { display: block; height: 30px; }
.zoom-ctl a + a { border-top: 1px solid #ccc; line-height: 28px; }
.attribution { position: absolute; right: 0; bottom: 0; width: 412px; height: 16px; padding: 0 5px 0 4px; background: rgba(255,255,255,.75); font-size: 11px; line-height: 16px; white-space: nowrap; text-align: right; letter-spacing: .075px; }
.attribution a { color: #0078a8; }

.result { padding: 49px 0 0 13px; }
.result h1 { margin: 0; font-size: 36px; line-height: 40px; font-weight: 400; -webkit-text-stroke: .8px #333; letter-spacing: .62px; }
.result p { margin: 0; font-size: 28px; line-height: 40px; }
.result .is-g { margin-top: 9px; }
.result .wasted { margin-top: 10px; letter-spacing: .08px; }

.selects { display: flex; gap: 5px; height: 21px; }
.sel { position: relative; height: 21px; }
.sel select { appearance: none; display: block; width: 100%; height: 21px; margin: 0; padding: 0 0 1px 8px; border: 1px solid #a5a5a5; border-radius: 4px; background: #f8f8f8; color: #333; font: 14px "Liberation Sans", sans-serif; }
.sel svg { position: absolute; right: 4px; top: 4.5px; width: 8px; height: 12px; fill: #333; }
.state { width: 124px; } .year { width: 56px; } .test { width: 184px; }
.test select { border-color: #4a90e2; box-shadow: 0 0 0 1.5px #6aacf0; }
.check { display: flex; align-items: center; gap: 8px; margin-top: 15px; height: 20px; letter-spacing: .05px; }
.check input { appearance: none; width: 12px; height: 12px; margin: 0; border: 1px solid #a8a8a8; border-radius: 3px; background: #fff; }
.save { display: block; margin-top: 10px; width: 77px; height: 25px; padding: 0 0 2px; border: 1px solid #bfbfbf; background: #e0e0e0; color: #333; font: 14px "Liberation Sans", sans-serif; }
.locked { display: block; margin-top: 3px; width: 92px; height: 17px; border-radius: 2px; background: #25c1e2; color: #fff; font: bold 10.5px/17px "Liberation Sans", sans-serif; text-align: center; -webkit-text-stroke: .3px #fff; }
.panel hr { margin: 40px 0 20px; border: 0; height: 1px; background: #eee; }
.panel h2 { margin: 0 0 9px; font-size: 18px; line-height: 20px; font-weight: 400; -webkit-text-stroke: .4px #333; white-space: nowrap; letter-spacing: .37px; }
.panel p { margin: 0 0 10px; white-space: nowrap; }
.panel hr.second { margin-top: 20px; }
.panel h2.demo { letter-spacing: .34px; }
.chart { display: block; }
.legend { font-size: 12px; fill: #666; }
mark { color: #fff; -webkit-text-stroke: .4px #fff; }
.dem-tag { background: #270b63; }
.rep-tag { background: #f00; }
```
